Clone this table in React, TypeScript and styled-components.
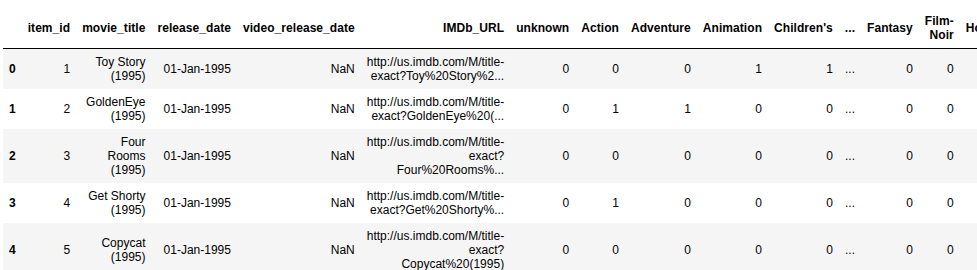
import React from "react";
import styled, { createGlobalStyle } from "styled-components";

const GlobalStyle = createGlobalStyle`
  html, body {
    margin: 0;
    padding: 0;
    background: #ffffff;
    overflow: hidden;
  }
  body {
    font-family: "Liberation Sans", Arial, sans-serif;
    color: #000000;
  }
`;

const Frame = styled.div`
  width: 977px;
  height: 270px;
  overflow: hidden;
  padding: 8px 0 0 3px;
  box-sizing: border-box;
`;

const Table = styled.table`
  border: none;
  border-collapse: collapse;
  border-spacing: 0;
  color: #000000;
  font-size: 12px;
  font-family: "Liberation Sans", Arial, sans-serif;
`;

const Head = styled.thead`
  border-bottom: 1px solid #000000;
  vertical-align: bottom;
`;

const HeaderCell = styled.th`
  text-align: right;
  vertical-align: middle;
  padding: 6px;
  line-height: normal;
  white-space: normal;
  font-weight: bold;
  letter-spacing: 0.06px;
`;

const BodyRow = styled.tr<{ $striped: boolean }>`
  background: ${(p) => (p.$striped ? "#f5f5f5" : "#ffffff")};
`;

const IndexCell = styled.th`
  text-align: right;
  vertical-align: middle;
  padding: 6px;
  line-height: normal;
  font-weight: bold;
`;

const Cell = styled.td`
  text-align: right;
  vertical-align: middle;
  padding: 6px;
  line-height: normal;
  white-space: normal;
`;

const columns = [
  "item_id",
  "movie_title",
  "release_date",
  "video_release_date",
  "IMDb_URL",
  "unknown",
  "Action",
  "Adventure",
  "Animation",
  "Children's",
  "...",
  "Fantasy",
  "Film-Noir",
  "Horror",
  "Musical",
  "Mystery",
  "Romance",
  "Sci-Fi",
  "Thriller",
  "War",
  "Western",
];

const rows: string[][] = [
  ["1", "Toy Story (1995)", "01-Jan-1995", "NaN", "http://us.imdb.com/M/title-exact?Toy%20Story%2...", "0", "0", "0", "1", "1", "...", "0", "0", "0", "0", "0", "0", "0", "0", "0", "0"],
  ["2", "GoldenEye (1995)", "01-Jan-1995", "NaN", "http://us.imdb.com/M/title-exact?GoldenEye%20(...", "0", "1", "1", "0", "0", "...", "0", "0", "0", "0", "0", "0", "0", "1", "0", "0"],
  ["3", "Four Rooms (1995)", "01-Jan-1995", "NaN", "http://us.imdb.com/M/title-exact?Four%20Rooms%...", "0", "0", "0", "0", "0", "...", "0", "0", "0", "0", "0", "0", "0", "1", "0", "0"],
  ["4", "Get Shorty (1995)", "01-Jan-1995", "NaN", "http://us.imdb.com/M/title-exact?Get%20Shorty%...", "0", "1", "0", "0", "0", "...", "0", "0", "0", "0", "0", "0", "0", "0", "0", "0"],
  ["5", "Copycat (1995)", "01-Jan-1995", "NaN", "http://us.imdb.com/M/title-exact?Copycat%20(1995)", "0", "0", "0", "0", "0", "...", "0", "0", "0", "0", "0", "0", "0", "1", "0", "0"],
];

export default function App() {
  return (
    <>
      <GlobalStyle />
      <Frame>
        <Table>
          <Head>
            <tr>
              <HeaderCell />
              {columns.map((c) => (
                <HeaderCell key={c}>{c}</HeaderCell>
              ))}
            </tr>
          </Head>
          <tbody>
            {rows.map((r, i) => (
              <BodyRow key={i} $striped={i % 2 === 0}>
                <IndexCell>{i}</IndexCell>
                {r.map((v, j) => (
                  <Cell key={j}>{v}</Cell>
                ))}
              </BodyRow>
            ))}
          </tbody>
        </Table>
      </Frame>
    </>
  );
}
